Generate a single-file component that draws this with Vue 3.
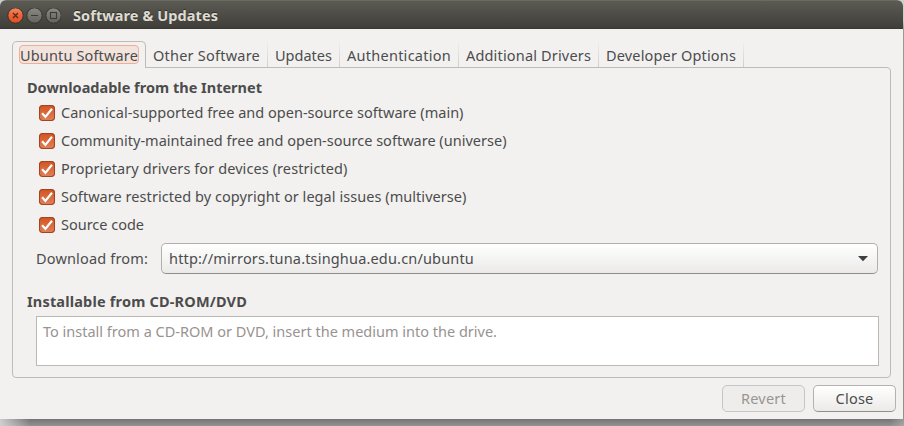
<script setup>
import { ref } from 'vue'

const tabs = [
  { label: 'Ubuntu Software', width: 118 },
  { label: 'Other Software', width: 107 },
  { label: 'Updates', width: 57 },
  { label: 'Authentication', width: 104 },
  { label: 'Additional Drivers', width: 125 },
  { label: 'Developer Options', width: 130 },
]
const active = ref(0)

const sources = ref([
  { label: 'Canonical-supported free and open-source software (main)', width: 402.5, on: true },
  { label: 'Community-maintained free and open-source software (universe)', width: 445.5, on: true },
  { label: 'Proprietary drivers for devices (restricted)', width: 286.5, on: true },
  { label: 'Software restricted by copyright or legal issues (multiverse)', width: 405.5, on: true },
  { label: 'Source code', width: 83, on: true },
])

// Tracks a label so that it occupies the given advance width.
const vFit = {
  mounted(el, { value }) {
    const natural = el.getBoundingClientRect().width
    el.style.letterSpacing = `${(value - natural) / el.textContent.length}px`
  },
}
</script>

<template>
  <div class="desktop">
    <div class="window">
      <header class="titlebar">
        <svg class="controls" width="54" height="18" viewBox="0 0 54 18">
          <defs>
            <linearGradient id="orange" x1="0" y1="0" x2="0" y2="1">
              <stop offset="0" stop-color="#f58a63" />
              <stop offset="0.5" stop-color="#ee6237" />
              <stop offset="1" stop-color="#e04f1e" />
            </linearGradient>
            <linearGradient id="grey" x1="0" y1="0" x2="0" y2="1">
              <stop offset="0" stop-color="#8b8983" />
              <stop offset="1" stop-color="#65635c" />
            </linearGradient>
          </defs>
          <circle cx="8.5" cy="7.5" r="7.7" fill="url(#orange)" stroke="#34332e" />
          <circle cx="27.5" cy="7.5" r="7.7" fill="url(#grey)" stroke="#34332e" />
          <circle cx="46.5" cy="7.5" r="7.7" fill="url(#grey)" stroke="#34332e" />
          <path d="M6 5l5 5M11 5l-5 5" stroke="#5a2b1b" stroke-width="1.4" />
          <path d="M24 7.5h7" stroke="#3c3b37" stroke-width="1.1" />
          <rect x="43.5" y="4.5" width="6" height="6" fill="none" stroke="#3c3b37" stroke-width="1.1" />
        </svg>
        <h1><span v-fit="145">Software &amp; Updates</span></h1>
      </header>

      <nav class="tabs">
        <button
          v-for="(tab, i) in tabs"
          :key="tab.label"
          class="tab"
          :class="{ active: i === active }"
          @click="active = i"
        >
          <span class="tab-label"><span v-fit="tab.width">{{ tab.label }}</span></span>
        </button>
      </nav>

      <main class="panel">
        <h2><span v-fit="235">Downloadable from the Internet</span></h2>
        <div class="sources">
          <div v-for="s in sources" :key="s.label" class="source" @click="s.on = !s.on">
            <span class="check">
              <svg v-if="s.on" width="16" height="16" viewBox="0 0 16 16">
                <path d="M3.1 8.2L6.4 11.9L13 3.8" fill="none" stroke="#fff" stroke-width="2.2" />
              </svg>
            </span>
            <span v-fit="s.width" class="text">{{ s.label }}</span>
          </div>
        </div>
        <div class="server">
          <span class="server-label text"><span v-fit="112">Download from:</span></span>
          <div class="combo">
            <span v-fit="305" class="text">http://mirrors.tuna.tsinghua.edu.cn/ubuntu</span>
            <svg width="10" height="6" viewBox="0 0 10 6"><path d="M0 0h10L5 5.2z" fill="#3f3f3f" /></svg>
          </div>
        </div>
        <h2 class="second"><span v-fit="220">Installable from CD-ROM/DVD</span></h2>
        <div class="media"><span v-fit="454">To install from a CD-ROM or DVD, insert the medium into the drive.</span></div>
      </main>

      <footer class="actions">
        <button class="action" disabled><span v-fit="45">Revert</span></button>
        <button class="action"><span v-fit="38">Close</span></button>
      </footer>
    </div>
    <div class="shadow"></div>
  </div>
</template>

<style>
body {
  margin: 0;
  overflow: hidden;
}
</style>

<style scoped>
* {
  box-sizing: border-box;
}
.desktop {
  width: 904px;
  height: 426px;
  background: linear-gradient(#c8d0cd 0, #c8d0cd 20px, #999 30px, #8f8f8f 100%);
  font: 14.5px/20px "Noto Sans", "Open Sans", sans-serif;
  color: #4c4c4c;
  white-space: nowrap;
}
.window {
  width: 903px;
  height: 419px;
  background: #f2f1f0;
  border-radius: 6px 6px 0 0;
  overflow: hidden;
}
.shadow {
  height: 7px;
  background:
    linear-gradient(90deg, rgba(225, 225, 225, 0.8), transparent 30px, transparent 890px, rgba(190, 190, 190, 0.5)),
    linear-gradient(#747474, #929292);
}
.text {
  padding-bottom: 2px;
}
.titlebar {
  display: flex;
  height: 29px;
  padding: 7px 0 0 7px;
  background: linear-gradient(#5b5a53, #3f3e39);
  border-top: 1px solid #6b6a62;
  border-bottom: 1px solid #393833;
}
.controls {
  flex: none;
}
h1 {
  margin: -3px 0 0 12px;
  font-size: 14.5px;
  line-height: 20px;
  color: #dfdbd2;
  text-shadow: 0 -1px #33322e;
}
.tabs {
  display: flex;
  height: 26px;
  margin: 12px 12px 0;
}
button {
  font: inherit;
  color: inherit;
  cursor: default;
}
.tab {
  display: flex;
  align-items: flex-start;
  flex: none;
  height: 26px;
  padding: 3px 7px 0;
  border: 0;
  border-right: 1px solid;
  border-image: linear-gradient(#f2f1f0, #cfccc8) 1;
  background: none;
  text-align: left;
}
.tab-label {
  display: block;
  height: 20px;
  line-height: 22px;
}
.tab.active {
  position: relative;
  z-index: 1;
  height: 27px;
  padding: 3px 6px 0;
  border: 1px solid #bfbcb8;
  border-image: none;
  border-bottom: 0;
  border-radius: 5px 5px 0 0;
  background: #f2f1f0;
}
.active .tab-label {
  width: 120px;
  height: 19px;
  line-height: 18px;
  border: 1px solid #eeae98;
  border-radius: 4px;
  background: #f2e3dd;
}
.panel {
  width: 879px;
  height: 311px;
  margin-left: 12px;
  padding: 9px 11px 0 14px;
  border: 1px solid #bfbcb8;
  border-radius: 0 4px 4px 4px;
}
h2 {
  margin: 0;
  font-size: 14.5px;
  line-height: 20px;
}
.sources {
  padding: 2px 0 0 12px;
}
.source {
  display: flex;
  align-items: center;
  gap: 6px;
  height: 28px;
}
.check {
  width: 16px;
  height: 16px;
  border-radius: 4px;
  background: linear-gradient(#d2521f, #e1825c);
  box-shadow: inset 0 0 0 1px #a04421;
}
.check svg {
  display: block;
}
.server {
  display: flex;
  align-items: center;
  height: 31px;
  margin-top: 4px;
  padding-left: 9px;
}
.server-label {
  width: 125px;
}
.combo {
  display: flex;
  align-items: center;
  justify-content: space-between;
  width: 717px;
  height: 31px;
  padding: 0 9px 0 7px;
  border: 1px solid #b2b0ad;
  border-bottom-color: #8f8d8a;
  border-radius: 5px;
  background: linear-gradient(#fff, #ebeae9);
}
.second {
  margin-top: 17px;
}
.media {
  width: 843px;
  height: 50px;
  margin: 5px 0 0 9px;
  padding: 4px 6px;
  border: 1px solid #bcb8b2;
  background: #fff;
  color: #989390;
}
.actions {
  display: flex;
  justify-content: flex-end;
  gap: 8px;
  padding: 7px 7px 0 0;
}
.action {
  width: 83px;
  height: 27px;
  padding: 0 0 2px;
  border: 1px solid #b5b2ae;
  border-bottom-color: #918f8c;
  border-radius: 5px;
  background: linear-gradient(#fff, #eceae9);
}
.action:disabled {
  border-color: #c8c6c4;
  background: #eeedec;
  color: #999592;
}
</style>
